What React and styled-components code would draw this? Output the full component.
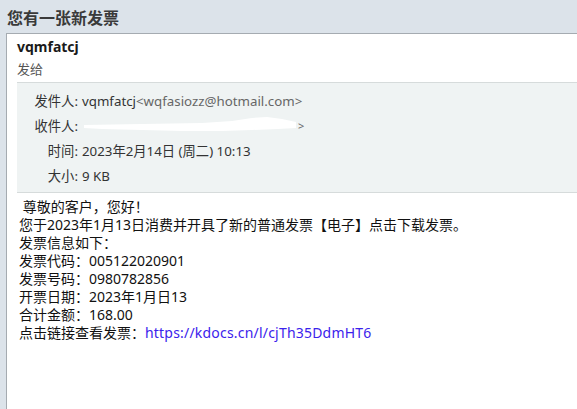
import React from "react";
import styled, { createGlobalStyle } from "styled-components";

const GlobalStyle = createGlobalStyle`
  html, body {
    margin: 0;
    padding: 0;
    background: #dce3ea;
  }
  body {
    font-family: "Noto Sans", "Noto Sans CJK SC", sans-serif;
  }
`;

const Page = styled.div`
  height: 409px;
  display: flex;
  flex-direction: column;
  overflow: hidden;
`;

const TitleBar = styled.h1`
  margin: 0;
  height: 33px;
  padding: 1px 7px 0;
  display: flex;
  align-items: center;
  font-size: 16px;
  font-weight: 700;
  color: #3a3a3a;
  box-sizing: border-box;
`;

const Panel = styled.div`
  flex: 1;
  margin-left: 6px;
  background: #fff;
  border-left: 1px solid #a5abb1;
  border-top: 1px solid #a5abb1;
  padding: 4px 0 0 10px;
`;

const Sender = styled.div`
  font-size: 14px;
  font-weight: 700;
  color: #1a1a1a;
  line-height: 18px;
`;

const SentTo = styled.div`
  font-size: 13px;
  color: #555;
  line-height: 18px;
  margin-top: 4px;
`;

const Meta = styled.div`
  margin-top: 4px;
  background: #eff3f3;
  border-top: 1px solid #d6dbdb;
  border-bottom: 1px solid #d6dbdb;
  padding: 5px 0 4px 14px;
  display: grid;
  grid-template-columns: 47px 1fr;
  grid-auto-rows: 25px;
  align-items: center;
  column-gap: 4px;
  font-size: 13.3px;
  color: #333;
`;

const Label = styled.span`
  text-align: right;
  white-space: nowrap;
`;

const Value = styled.span`
  display: flex;
  align-items: center;
  white-space: nowrap;
`;

const Dim = styled.span`
  color: #666;
`;

const Body = styled.div`
  margin-top: 5px;
  padding-left: 2px;
  font-size: 14px;
  line-height: 18px;
  color: #111;
  white-space: pre;
`;

const Link = styled.a`
  color: #3b22ec;
  text-decoration: none;
  letter-spacing: 0.2px;
`;

function Redacted() {
  return (
    <svg width="216" height="20" viewBox="0 0 216 20" style={{ display: "block" }}>
      <path
        d="M2 9 L60 8 L120 7 L150 5 L170 2 L185 1 L200 3 L214 6 L214 12 L196 13 L170 14 L140 15 L100 15 L60 14 L20 13 L2 12 Z"
        fill="#ffffff"
      />
    </svg>
  );
}

export default function App() {
  const lines = [
    " 尊敬的客户，您好！",
    "您于2023年1月13日消费并开具了新的普通发票【电子】点击下载发票。",
    "发票信息如下：",
    "发票代码：005122020901",
    "发票号码：0980782856",
    "开票日期：2023年1月日13",
    "合计金额：168.00",
  ];
  return (
    <>
      <GlobalStyle />
      <Page>
        <TitleBar>您有一张新发票</TitleBar>
        <Panel>
          <Sender>vqmfatcj</Sender>
          <SentTo>发给</SentTo>
          <Meta>
            <Label>发件人:</Label>
            <Value>
              vqmfatcj<Dim>&lt;wqfasiozz@hotmail.com&gt;</Dim>
            </Value>
            <Label>收件人:</Label>
            <Value>
              <Redacted />
              <Dim style={{ fontSize: 11 }}>&gt;</Dim>
            </Value>
            <Label>时间:</Label>
            <Value>2023年2月14日 (周二) 10:13</Value>
            <Label>大小:</Label>
            <Value>9 KB</Value>
          </Meta>
          <Body>
            {lines.join("\n")}
            {"\n点击链接查看发票："}
            <Link href="#">https://kdocs.cn/l/cjTh35DdmHT6</Link>
          </Body>
        </Panel>
      </Page>
    </>
  );
}
